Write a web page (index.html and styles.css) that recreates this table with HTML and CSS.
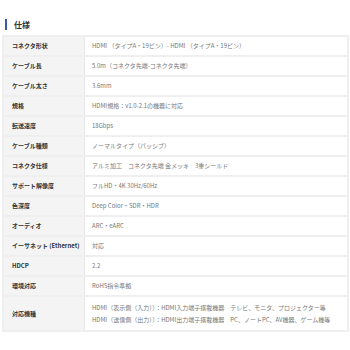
FILE: index.html
```html
<!DOCTYPE html>
<html lang="ja">
<head>
<meta charset="utf-8">
<link rel="stylesheet" href="styles.css">
</head>
<body>
<section class="spec">
  <h2 class="spec-title">仕様</h2>
  <table class="spec-table">
    <tr><th>コネクタ形状</th><td>HDMI （タイプA・19ピン）- HDMI （タイプA・19ピン）</td></tr>
    <tr><th>ケーブル長</th><td>5.0m（コネクタ先端-コネクタ先端）</td></tr>
    <tr><th>ケーブル太さ</th><td>3.6mm</td></tr>
    <tr><th>規格</th><td>HDMI規格：v1.0-2.1の機器に対応</td></tr>
    <tr><th>転送速度</th><td>18Gbps</td></tr>
    <tr><th>ケーブル種類</th><td>ノーマルタイプ（パッシブ）</td></tr>
    <tr><th>コネクタ仕様</th><td>アルミ加工　コネクタ先端 金メッキ　3重シールド</td></tr>
    <tr><th>サポート解像度</th><td>フルHD・4K 30Hz/60Hz</td></tr>
    <tr><th>色深度</th><td>Deep Color・SDR・HDR</td></tr>
    <tr><th>オーディオ</th><td>ARC・eARC</td></tr>
    <tr><th>イーサネット (Ethernet)</th><td>対応</td></tr>
    <tr><th>HDCP</th><td>2.2</td></tr>
    <tr><th>環境対応</th><td>RoHS指令準拠</td></tr>
    <tr class="tall"><th>対応機種</th><td>HDMI（表示側（入力））：HDMI入力端子搭載機器　テレビ、モニタ、プロジェクター等<br>HDMI（送信側（出力））：HDMI出力端子搭載機器　PC、ノートPC、AV機器、ゲーム機等</td></tr>
  </table>
</section>
</body>
</html>
```
FILE: styles.css
```css
html, body {
  margin: 0;
  padding: 0;
  background: #ffffff;
}
body {
  font-family: "Noto Sans CJK JP", "Noto Sans", sans-serif;
  color: #333;
}
.spec {
  padding: 19px 1px 0 2px;
}
.spec-title {
  margin: 0 0 5px 3px;
  padding-left: 7px;
  border-left: 2px solid #3a5ba8;
  font-size: 8px;
  line-height: 11px;
  font-weight: 700;
  color: #333;
}
.spec-table {
  width: 347px;
  border-collapse: collapse;
  border: 2px solid #efefef;
}
.spec-table th,
.spec-table td {
  height: 18px;
  padding: 0;
  border-bottom: 2px solid #efefef;
  font-size: 6px;
  line-height: 12px;
  vertical-align: middle;
  text-align: left;
  white-space: nowrap;
}
.spec-table th {
  width: 72px;
  padding-left: 8px;
  background: #f4f4f4;
  border-right: 1px solid #e8e8e8;
  font-weight: 700;
  color: #333;
}
.spec-table td {
  padding-left: 7px;
  color: #777;
  font-weight: 400;
}
.spec-table .tall th,
.spec-table .tall td {
  height: 33px;
}
```
